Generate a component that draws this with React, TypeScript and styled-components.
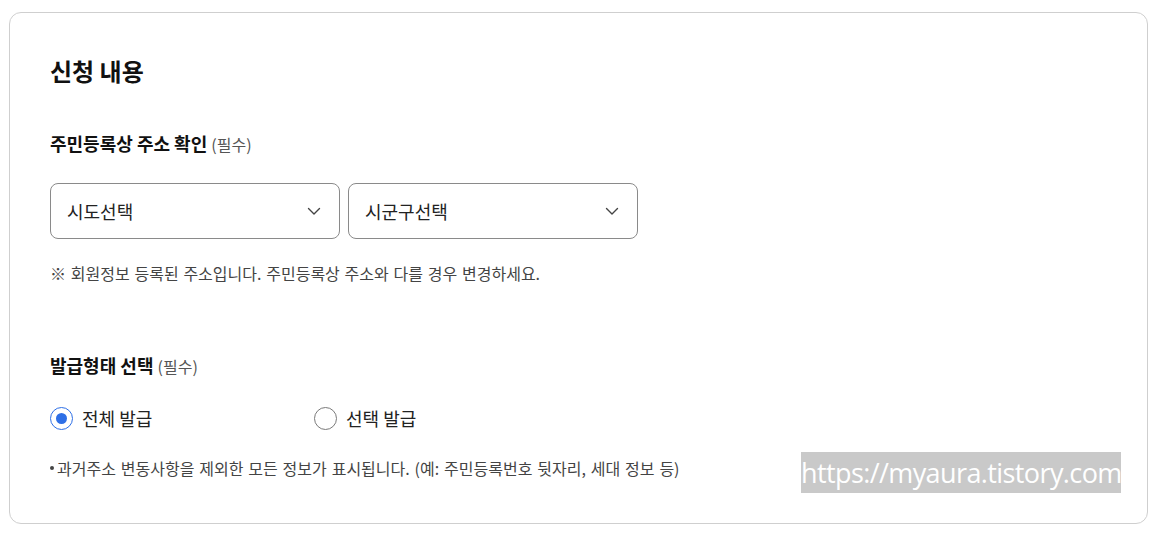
import React from "react";
import styled, { createGlobalStyle } from "styled-components";

const GlobalStyle = createGlobalStyle`
  body {
    margin: 0;
    background: #ffffff;
    font-family: "Noto Sans CJK KR", "Noto Sans", sans-serif;
    color: #111111;
  }
`;

const regions = [
  { id: "sido", placeholder: "시도선택" },
  { id: "sigungu", placeholder: "시군구선택" },
];

const issueTypes = [
  { id: "all", label: "전체 발급", checked: true },
  { id: "select", label: "선택 발급", checked: false },
];

function Chevron() {
  return (
    <svg width="14" height="9" viewBox="0 0 14 9" fill="none">
      <path d="M1.5 1.5L7 7l5.5-5.5" stroke="#444" strokeWidth="1.4" strokeLinecap="round" strokeLinejoin="round" />
    </svg>
  );
}

function App() {
  return (
    <Page>
      <GlobalStyle />
      <Card>
        <Title>신청 내용</Title>

        <FieldLabel $top={45}>
          주민등록상 주소 확인 <Required>(필수)</Required>
        </FieldLabel>
        <SelectRow>
          {regions.map((r) => (
            <SelectBox key={r.id} type="button">
              <span>{r.placeholder}</span>
              <Chevron />
            </SelectBox>
          ))}
        </SelectRow>
        <Note>※ 회원정보 등록된 주소입니다. 주민등록상 주소와 다를 경우 변경하세요.</Note>

        <FieldLabel $top={69}>
          발급형태 선택 <Required>(필수)</Required>
        </FieldLabel>
        <RadioRow>
          {issueTypes.map((t) => (
            <RadioOption key={t.id}>
              <RadioCircle $checked={t.checked} />
              {t.label}
            </RadioOption>
          ))}
        </RadioRow>
        <Bullet>
          <Dot />
          과거주소 변동사항을 제외한 모든 정보가 표시됩니다. (예: 주민등록번호 뒷자리, 세대 정보 등)
        </Bullet>

        <Watermark>https://myaura.tistory.com</Watermark>
      </Card>
    </Page>
  );
}

const Page = styled.div`
  padding: 12px 13px 10px 9px;
`;

const Card = styled.section`
  position: relative;
  box-sizing: border-box;
  height: 512px;
  padding: 43px 40px 0 40px;
  border: 1px solid #cfcfcf;
  border-radius: 12px;
`;

const Title = styled.h2`
  margin: 0;
  font-size: 24px;
  line-height: 30px;
  font-weight: 700;
  color: #111;
`;

const FieldLabel = styled.h3<{ $top: number }>`
  margin: ${(p) => p.$top}px 0 0 0;
  font-size: 18px;
  line-height: 24px;
  font-weight: 700;
  color: #111;
`;

const Required = styled.span`
  font-size: 16px;
  font-weight: 400;
  color: #555;
`;

const SelectRow = styled.div`
  display: flex;
  gap: 8px;
  margin-top: 27px;
`;

const SelectBox = styled.button`
  display: flex;
  align-items: center;
  justify-content: space-between;
  box-sizing: border-box;
  width: 290px;
  height: 56px;
  padding: 0 18px 0 16px;
  border: 1px solid #8a8a8a;
  border-radius: 8px;
  background: #fff;
  font-family: inherit;
  font-size: 18px;
  color: #222;
  text-align: left;
  cursor: pointer;
`;

const Note = styled.p`
  margin: 23px 0 0 0;
  font-size: 16px;
  line-height: 22px;
  color: #444;
  word-spacing: 1.2px;
`;

const RadioRow = styled.div`
  display: grid;
  grid-template-columns: 264px 264px;
  margin-top: 28px;
`;

const RadioOption = styled.label`
  display: flex;
  align-items: center;
  gap: 9px;
  height: 24px;
  font-size: 18px;
  color: #222;
  cursor: pointer;
`;

const RadioCircle = styled.span<{ $checked: boolean }>`
  position: relative;
  box-sizing: border-box;
  width: 23px;
  height: 23px;
  border-radius: 50%;
  border: 1.5px solid ${(p) => (p.$checked ? "#2e6fe6" : "#7a7a7a")};
  background: #fff;

  &::after {
    content: "";
    display: ${(p) => (p.$checked ? "block" : "none")};
    position: absolute;
    top: 50%;
    left: 50%;
    width: 11px;
    height: 11px;
    margin: -5.5px 0 0 -5.5px;
    border-radius: 50%;
    background: #2e6fe6;
  }
`;

const Bullet = styled.p`
  display: flex;
  align-items: center;
  margin: 27px 0 0 0;
  font-size: 16px;
  line-height: 22px;
  color: #444;
  word-spacing: 1.3px;
`;

const Dot = styled.span`
  width: 4px;
  height: 4px;
  margin-right: 3px;
  border-radius: 50%;
  background: #444;
`;

const Watermark = styled.div`
  position: absolute;
  left: 791px;
  top: 439px;
  width: 320px;
  height: 41px;
  background: #c9c9c9;
  color: #fff;
  font-family: "Open Sans", sans-serif;
  font-size: 27px;
  line-height: 41px;
  text-align: center;
  letter-spacing: -0.6px;
  white-space: nowrap;
`;

export default App;
